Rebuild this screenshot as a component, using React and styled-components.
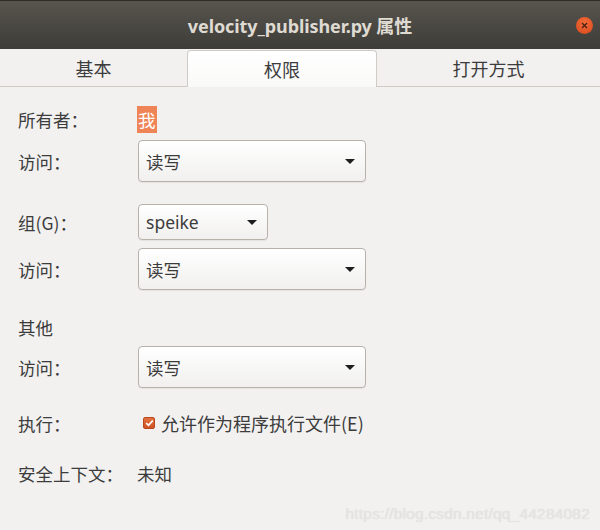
import React from "react";
import styled, { createGlobalStyle } from "styled-components";

const GlobalStyle = createGlobalStyle`
  html, body {
    margin: 0;
    padding: 0;
    background: #f2f1f0;
  }
  body {
    font-family: "Noto Sans", "Noto Sans CJK SC", sans-serif;
    color: #3c3c3c;
  }
`;

const Window = styled.div`
  width: 600px;
  height: 530px;
  background: #f2f1f0;
  position: relative;
  overflow: hidden;
`;

const TitleBar = styled.div`
  height: 49px;
  background: linear-gradient(#58554e, #3d3c38);
  border-top: 1px solid #2e2d2a;
  box-sizing: border-box;
  display: flex;
  align-items: center;
  justify-content: center;
  position: relative;
`;

const Title = styled.div`
  color: #dfdbd2;
  font-weight: bold;
  font-size: 18px;
  font-family: "Noto Sans", "Noto Sans CJK SC", sans-serif;
  letter-spacing: -0.1px;
`;

const CloseButton = styled.div`
  position: absolute;
  right: 7px;
  top: 16px;
  width: 17px;
  height: 17px;
  border-radius: 50%;
  background: radial-gradient(circle at 50% 35%, #f46c3a, #d6471a);
  display: flex;
  align-items: center;
  justify-content: center;
`;

const TabBar = styled.div`
  display: flex;
  height: 36px;
  border-bottom: 1px solid #cfcac4;
  padding-top: 1px;
  box-sizing: content-box;
`;

const Tab = styled.div`
  width: ${(p) => (p.$width ? `${p.$width}px` : "auto")};
  flex: ${(p) => (p.$width ? "none" : "1")};
  box-sizing: border-box;
  display: flex;
  align-items: center;
  justify-content: center;
  font-size: 18px;
  font-family: "Noto Sans CJK SC", sans-serif;
  color: #3c3c3c;
  border-radius: 4px 4px 0 0;
  ${(p) =>
    p.$active &&
    `
    background: linear-gradient(#ffffff, #f9f9f8);
    border: 1px solid #cfcac4;
    border-bottom: none;
    margin-bottom: -1px;
  `}
`;

const Content = styled.div`
  padding: 19px 0 0 18px;
  display: flex;
  flex-direction: column;
`;

const Row = styled.div`
  display: flex;
  align-items: center;
  height: ${(p) => p.$h}px;
  margin-top: ${(p) => p.$mt || 0}px;
`;

const Label = styled.div`
  width: 120px;
  font-size: 17.5px;
  font-family: "Noto Sans CJK SC", sans-serif;
  color: #3c3c3c;
`;

const Value = styled.div`
  font-size: 17.5px;
  font-family: "Noto Sans CJK SC", sans-serif;
  color: #3c3c3c;
  margin-left: -1px;
`;

const Selected = styled.span`
  background: #ef8457;
  color: #ffffff;
  font-size: 17.5px;
  font-family: "Noto Sans CJK SC", sans-serif;
  height: 27px;
  line-height: 27px;
  padding: 0 1px;
  margin-left: -1px;
`;

const Combo = styled.div`
  width: ${(p) => p.$w}px;
  height: 100%;
  box-sizing: border-box;
  border: 1px solid #b8b2ab;
  border-radius: 4px;
  background: linear-gradient(#ffffff, #f1f0ef);
  box-shadow: 0 1px 1px rgba(0, 0, 0, 0.06);
  display: flex;
  align-items: center;
  justify-content: space-between;
  padding: 0 10px 0 7px;
  font-size: 17.5px;
  font-family: "Noto Sans", "Noto Sans CJK SC", sans-serif;
  color: #3c3c3c;
`;

const Arrow = styled.span`
  width: 0;
  height: 0;
  border-left: 5px solid transparent;
  border-right: 5px solid transparent;
  border-top: 5px solid #1e1e1e;
`;

const Check = styled.label`
  display: flex;
  align-items: center;
  gap: 6px;
  margin-left: 5px;
  font-size: 18px;
  font-family: "Noto Sans CJK SC", "Noto Sans", sans-serif;
  color: #3c3c3c;
`;

const Box = styled.span`
  width: 12px;
  height: 12px;
  border-radius: 2px;
  background: linear-gradient(#e5703e, #cc5326);
  border: 1px solid #b8491f;
  box-sizing: border-box;
  display: flex;
  align-items: center;
  justify-content: center;
`;

const Watermark = styled.div`
  position: absolute;
  right: 10px;
  bottom: 7px;
  font-family: "Liberation Sans", Arial, sans-serif;
  font-size: 15.5px;
  color: #e6e5e3;
  text-shadow: 0 0 1px #d8d6d3;
  letter-spacing: 0.2px;
`;

const ComboBox = ({ w, text }) => (
  <Combo $w={w}>
    <span>{text}</span>
    <Arrow />
  </Combo>
);

export default function App() {
  return (
    <Window>
      <GlobalStyle />
      <TitleBar>
        <Title>velocity_publisher.py 属性</Title>
        <CloseButton>
          <svg width="7" height="7" viewBox="0 0 7 7">
            <path d="M1 1L6 6M6 1L1 6" stroke="#4a2010" strokeWidth="1.3" />
          </svg>
        </CloseButton>
      </TitleBar>
      <TabBar>
        <Tab $width={187}>基本</Tab>
        <Tab $width={190} $active>
          权限
        </Tab>
        <Tab>打开方式</Tab>
      </TabBar>
      <Content>
        <Row $h={27}>
          <Label>所有者：</Label>
          <Selected>我</Selected>
        </Row>
        <Row $h={42} $mt={7}>
          <Label>访问：</Label>
          <ComboBox w={228} text="读写" />
        </Row>
        <Row $h={36} $mt={22}>
          <Label>组(G)：</Label>
          <ComboBox w={130} text="speike" />
        </Row>
        <Row $h={42} $mt={8}>
          <Label>访问：</Label>
          <ComboBox w={228} text="读写" />
        </Row>
        <Row $h={24} $mt={25}>
          <Label>其他</Label>
        </Row>
        <Row $h={42} $mt={7}>
          <Label>访问：</Label>
          <ComboBox w={228} text="读写" />
        </Row>
        <Row $h={24} $mt={23}>
          <Label>执行：</Label>
          <Check>
            <Box>
              <svg width="9" height="8" viewBox="0 0 9 8">
                <path
                  d="M1.2 4.2L3.5 6.3L7.8 1.5"
                  fill="none"
                  stroke="#ffffff"
                  strokeWidth="1.8"
                />
              </svg>
            </Box>
            允许作为程序执行文件(E)
          </Check>
        </Row>
        <Row $h={24} $mt={26}>
          <Label>安全上下文：</Label>
          <Value>未知</Value>
        </Row>
      </Content>
      <Watermark>https://blog.csdn.net/qq_44284082</Watermark>
    </Window>
  );
}
